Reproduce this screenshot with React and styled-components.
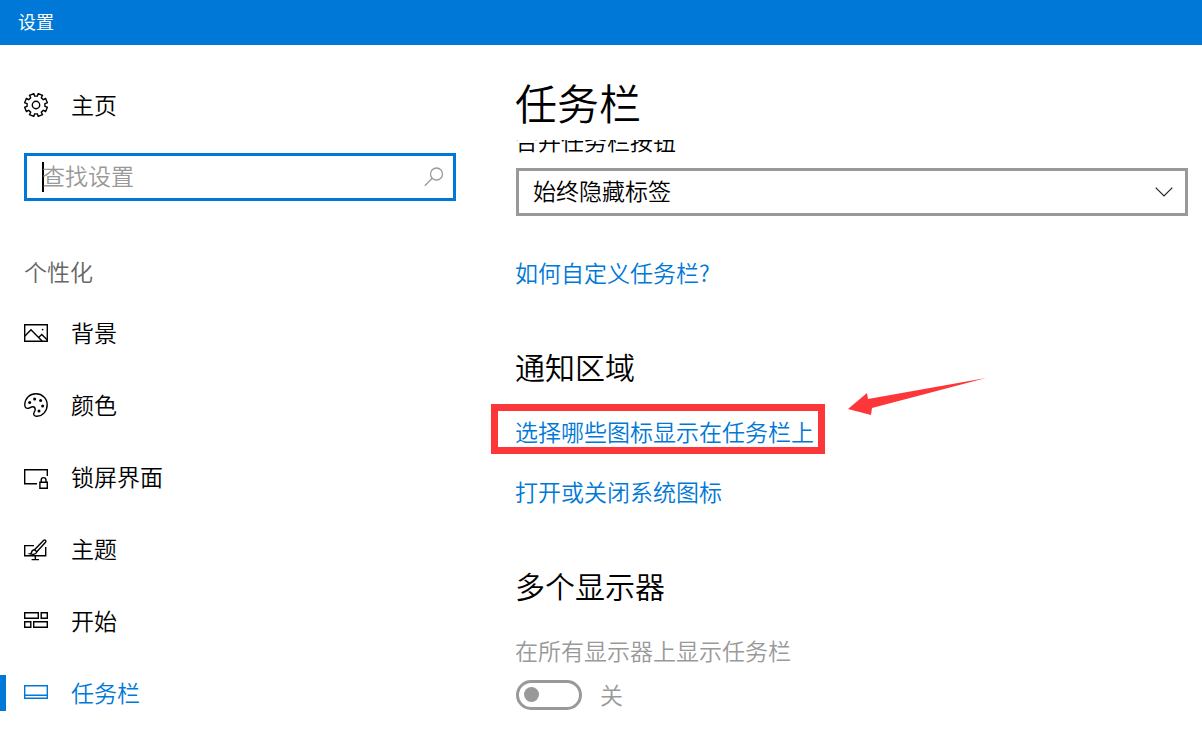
import React, { useState } from "react";
import styled, { createGlobalStyle } from "styled-components";

const GlobalStyle = createGlobalStyle`
  * {
    box-sizing: border-box;
  }
  body {
    margin: 0;
    background-color: #fff;
    color: #000;
    font-family: "Noto Sans CJK SC", sans-serif;
    font-size: 23px;
    font-weight: 350;
    line-height: 32px;
  }
`;

// eight teeth, with a notch at the top
const gearPath = () => {
  const points = [];
  for (let i = 0; i < 8; i++) {
    const mid = (i * 45 + 22.5) * (Math.PI / 180);
    [
      [-0.24, 9],
      [-0.2, 11.6],
      [0.2, 11.6],
      [0.24, 9],
    ].forEach(([turn, radius]) => {
      const x = 12 + radius * Math.sin(mid + turn);
      const y = 12 - radius * Math.cos(mid + turn);
      points.push(x.toFixed(2) + " " + y.toFixed(2));
    });
  }
  return "M" + points.join("L") + "Z";
};

const GearIcon = () => (
  <Icon viewBox="0 0 24 24">
    <path d={gearPath()} />
    <circle cx="12" cy="12" r="3.7" />
  </Icon>
);

const PictureIcon = () => (
  <Icon viewBox="0 0 24 24">
    <path d="M.7 3.7h22.6v16.6H.7z" />
    <path d="M.7 15.2 7 8.7l11.3 11.5M14.8 16.3l3-2.8 5.5 5.6" />
    <circle cx="18.6" cy="8.6" r=".9" fill="currentColor" stroke="none" />
  </Icon>
);

const PaletteIcon = () => (
  <Icon viewBox="0 0 24 24">
    <path d="M.8 11.6C1 5.3 5.8.8 12 .8c6.3 0 11.2 4.7 11.2 11 0 6.4-4.6 11.4-10.2 11.4-2.3 0-3.5-1-3.3-2.6.2-1.5 1.5-2.5 1.5-4.2 0-1.6-1.1-2.7-2.6-2.7-2 0-3 1.7-4.9 1.7C1.7 15.4.7 13.9.8 11.6z" />
    <g fill="currentColor" stroke="none">
      <circle cx="5.7" cy="9.5" r="1.5" />
      <circle cx="10.6" cy="6" r="1.5" />
      <circle cx="16.6" cy="7.5" r="1.5" />
      <circle cx="18.6" cy="13" r="1.5" />
      <circle cx="15" cy="18" r="1.5" />
    </g>
  </Icon>
);

const LockScreenIcon = () => (
  <Icon viewBox="0 0 24 24">
    <path d="M13 18.7H.7V4.7h22.6V11" />
    <path d="M15.9 17.2h7.4v6.1h-7.4z" />
    <path d="M17.2 17.2V15a2.4 2.4 0 0 1 4.8 0v2.2" />
  </Icon>
);

const ThemeIcon = () => (
  <Icon viewBox="0 0 24 24">
    <path d="M10 8.6H.7v10.1h21V10M11.3 18.7v3.9M7.6 22.6h7.4" />
    <path d="M10.5 12.8 19.500 3.500c1.400-1.300 3.200.3 2 1.800l-8.700 9.500" />
    <path d="M10.5 12.8c-1.900.1-2.700 1.200-2.900 2.600-.1.900-.7 1.300-1.600 1.500 3 .9 6.200.5 6.800-2.100z" />
  </Icon>
);

const StartIcon = () => (
  <Icon viewBox="0 0 24 24">
    <path d="M.7 3.7h13.6v5.6H.7zM17.2 3.7h6.1v5.6h-6.1zM.7 12.7h6.1v5.6H.7zM9.7 12.7h13.6v5.6H9.7z" />
  </Icon>
);

const TaskbarIcon = () => (
  <Icon viewBox="0 0 24 24">
    <path d="M.7 4.7h22.6v12.600H.7zM.7 14.3h22.6" />
  </Icon>
);

const navItems = [
  { id: "background", label: "背景", icon: PictureIcon },
  { id: "colors", label: "颜色", icon: PaletteIcon },
  { id: "lockscreen", label: "锁屏界面", icon: LockScreenIcon },
  { id: "themes", label: "主题", icon: ThemeIcon },
  { id: "start", label: "开始", icon: StartIcon },
  { id: "taskbar", label: "任务栏", icon: TaskbarIcon },
];

const App = () => {
  const [active, setActive] = useState("taskbar");
  return (
    <>
      <GlobalStyle />
      <TitleBar>设置</TitleBar>
      <Layout>
        <Sidebar>
          <NavLink href="#home">
            <GearIcon />
            <NavText>主页</NavText>
          </NavLink>
          <SearchBox>
            <Caret />
            <SearchInput
              type="text"
              placeholder="查找设置"
              aria-label="查找设置"
            />
            <SearchIcon viewBox="0 0 20 20">
              <circle cx="12.5" cy="7" r="6" />
              <path d="M8.2 11.3.8 18.7" />
            </SearchIcon>
          </SearchBox>
          <Category>个性化</Category>
          <nav>
            {navItems.map(({ id, label, icon: ItemIcon }) => (
              <NavLink
                key={id}
                href={"#" + id}
                $active={active === id}
                onClick={() => setActive(id)}
              >
                <ItemIcon />
                <NavText>{label}</NavText>
              </NavLink>
            ))}
          </nav>
        </Sidebar>
        <Content>
          <Title>任务栏</Title>
          <ScrollArea>
            <Scrolled>
              <FieldLabel htmlFor="combine">合并任务栏按钮</FieldLabel>
              <SelectBox>
                <Select id="combine" defaultValue="always">
                  <option value="always">始终隐藏标签</option>
                </Select>
                <Chevron viewBox="0 0 18 10">
                  <path d="M.7.7 9 9 17.3.7" />
                </Chevron>
              </SelectBox>
              <HelpLink href="#customize">如何自定义任务栏?</HelpLink>
              <Section>
                <SectionTitle>通知区域</SectionTitle>
                <LinkList>
                  <Marked>
                    <TextLink href="#icons">选择哪些图标显示在任务栏上</TextLink>
                    <MarkFrame />
                    <MarkArrow viewBox="0 0 138 38">
                      <path d="M0 31 19 15l1 6L138 0 24 30l-1 7z" />
                    </MarkArrow>
                  </Marked>
                  <TextLink href="#system-icons">打开或关闭系统图标</TextLink>
                </LinkList>
              </Section>
              <Section>
                <SectionTitle>多个显示器</SectionTitle>
                <ToggleField>
                  <FieldLabel htmlFor="all-displays" $disabled>
                    在所有显示器上显示任务栏
                  </FieldLabel>
                  <ToggleRow>
                    <Toggle type="checkbox" id="all-displays" disabled />
                    <ToggleState>关</ToggleState>
                  </ToggleRow>
                </ToggleField>
              </Section>
            </Scrolled>
          </ScrollArea>
        </Content>
      </Layout>
    </>
  );
};

const TitleBar = styled.header`
  padding: 5px 18px 8px;
  background-color: #0078d7;
  color: #fff;
  font-size: 18px;
  font-weight: 400;
`;

const Layout = styled.div`
  display: flex;
`;

const Sidebar = styled.aside`
  flex: 0 0 480px;
  padding-top: 24px;
`;

const Icon = styled.svg`
  width: 24px;
  height: 24px;
  fill: none;
  stroke: currentColor;
  stroke-width: 1.4;
`;

const NavLink = styled.a`
  display: flex;
  align-items: center;
  gap: 23px;
  height: 72px;
  padding-left: 24px;
  color: ${({ $active }) => ($active ? "#0078d7" : "#000")};
  background: ${({ $active }) =>
    $active
      ? "linear-gradient(#0078d7, #0078d7) left center / 6px 36px no-repeat"
      : "none"};
  text-decoration: none;
`;

const NavText = styled.span`
  padding-bottom: 2px;
`;

const SearchBox = styled.div`
  display: flex;
  align-items: center;
  height: 48px;
  margin: 12px 24px 0;
  padding: 0 9px 0 15px;
  border: 3px solid #0078d7;
`;

const Caret = styled.span`
  width: 2px;
  height: 30px;
  margin-right: -2px;
  background-color: #000;
`;

const SearchInput = styled.input`
  flex: 1;
  min-width: 0;
  padding: 0 0 4px;
  border: 0;
  outline: 0;
  background: none;
  font: inherit;
  &::placeholder {
    color: #999;
    opacity: 1;
  }
`;

const SearchIcon = styled.svg`
  width: 20px;
  height: 20px;
  fill: none;
  stroke: #999;
  stroke-width: 1.3;
`;

const Category = styled.h2`
  margin: 46px 0 0;
  padding: 0 0 2px 24px;
  color: #666;
  font-size: 23px;
  font-weight: 350;
  line-height: 48px;
`;

const Content = styled.main`
  flex: 1;
  min-width: 0;
  padding: 33px 14px 0 0;
`;

const Title = styled.h1`
  margin: 0;
  padding-left: 35px;
  font-size: 42px;
  font-weight: 350;
  line-height: 48px;
`;

const ScrollArea = styled.div`
  margin-top: 14px;
  padding-left: 35px;
  overflow: hidden;
`;

const Scrolled = styled.div`
  margin-top: -16px;
`;

const FieldLabel = styled.label`
  display: block;
  color: ${({ $disabled }) => ($disabled ? "#999" : "#000")};
`;

const SelectBox = styled.div`
  position: relative;
  margin: 12px 0 0 1px;
`;

const Select = styled.select`
  display: block;
  width: 100%;
  height: 48px;
  padding: 0 48px 4px 14px;
  border: 3px solid #999;
  border-radius: 0;
  background-color: #fff;
  color: #000;
  font: inherit;
  appearance: none;
`;

const Chevron = styled.svg`
  position: absolute;
  top: 19px;
  right: 15px;
  width: 18px;
  height: 10px;
  fill: none;
  stroke: #222;
  stroke-width: 1.2;
  pointer-events: none;
`;

const TextLink = styled.a`
  color: #0078d7;
  text-decoration: none;
`;

const HelpLink = styled(TextLink)`
  display: block;
  margin-top: 40px;
`;

const Section = styled.section`
  margin-top: 57px;
`;

const SectionTitle = styled.h2`
  margin: 0;
  font-size: 30px;
  font-weight: 350;
  line-height: 42px;
`;

const LinkList = styled.div`
  display: flex;
  flex-direction: column;
  align-items: flex-start;
  gap: 28px;
  margin-top: 28px;
`;

const Marked = styled.div`
  position: relative;
`;

const MarkFrame = styled.span`
  position: absolute;
  top: -11px;
  left: -24px;
  width: 334px;
  height: 50px;
  border: 7px solid #fd3739;
  pointer-events: none;
`;

const MarkArrow = styled.svg`
  position: absolute;
  top: -37px;
  left: 333px;
  width: 138px;
  height: 38px;
  fill: #fd3739;
  pointer-events: none;
`;

const ToggleField = styled.div`
  margin-top: 28px;
`;

const ToggleRow = styled.div`
  display: flex;
  align-items: center;
  gap: 18px;
  margin: 12px 0 0 1px;
  color: #999;
`;

const ToggleState = styled.span`
  padding-bottom: 1px;
`;

const Toggle = styled.input`
  display: flex;
  align-items: center;
  width: 66px;
  height: 30px;
  margin: 0;
  padding: 0 5px;
  border: 3px solid #999;
  border-radius: 15px;
  appearance: none;
  &::before {
    content: "";
    width: 15px;
    height: 15px;
    border-radius: 50%;
    background-color: #999;
  }
`;

export default App;
